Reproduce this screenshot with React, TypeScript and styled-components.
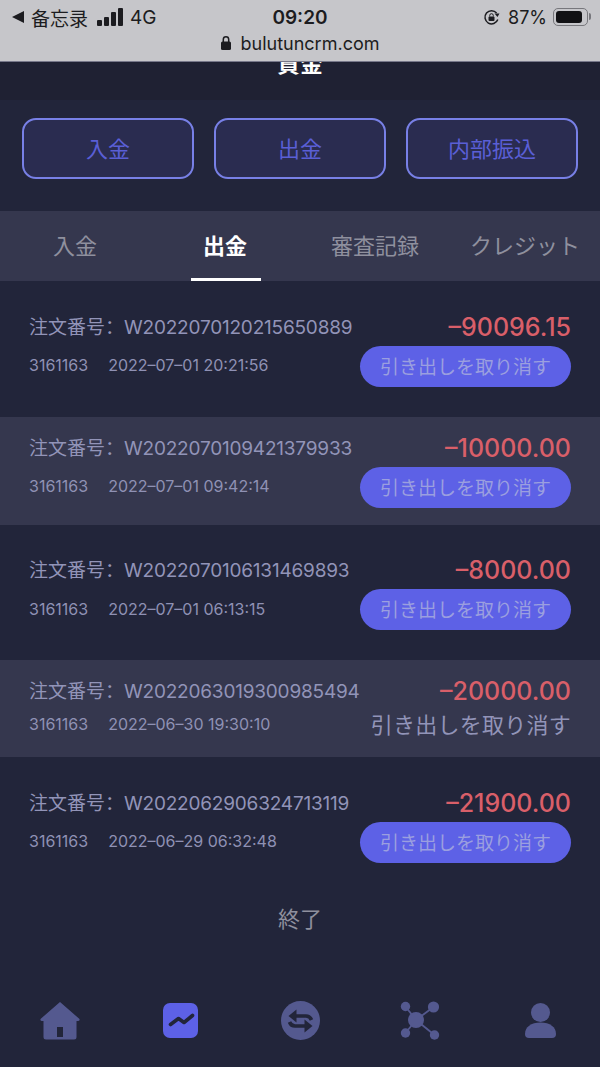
import React from 'react';
import styled, { createGlobalStyle } from 'styled-components';

const latin = `Inter, "Noto Sans CJK JP", sans-serif`;

type OrderType = {
   no: string;
   user: string;
   time: string;
   amount: string;
   striped?: boolean;
   plain?: boolean;
};

const orders: OrderType[] = [
   { no: 'W2022070120215650889', user: '3161163', time: '2022–07–01 20:21:56', amount: '–90096.15' },
   { no: 'W2022070109421379933', user: '3161163', time: '2022–07–01 09:42:14', amount: '–10000.00', striped: true },
   { no: 'W2022070106131469893', user: '3161163', time: '2022–07–01 06:13:15', amount: '–8000.00' },
   { no: 'W2022063019300985494', user: '3161163', time: '2022–06–30 19:30:10', amount: '–20000.00', striped: true, plain: true },
   { no: 'W2022062906324713119', user: '3161163', time: '2022–06–29 06:32:48', amount: '–21900.00' },
];

const HomeIcon = () => (
   <svg width="40" height="38" viewBox="0 0 40 38">
      <path
         fill="#54598f"
         fillRule="evenodd"
         d="M20 0 L39.5 17 Q40 19 38 19 H36.5 V35 Q36.5 37.5 34 37.5 H6 Q3.5 37.5 3.5 35 V19 H2 Q0 19 .5 17 Z M17 25 V35 H23 V25 Z"
      />
   </svg>
);

const TrendIcon = () => (
   <svg width="35" height="35" viewBox="0 0 35 35">
      <rect width="35" height="35" rx="7" fill="#5d61e6" />
      <path
         d="M7.5 21.5 L15.5 15.5 L21 19.5 L29.5 12.5"
         fill="none"
         stroke="#22253a"
         strokeWidth="3.6"
         strokeLinecap="round"
         strokeLinejoin="round"
      />
   </svg>
);

const SwapIcon = () => (
   <svg width="39" height="39" viewBox="0 0 39 39">
      <circle cx="19.5" cy="19.5" r="19.5" fill="#54598f" />
      <path d="M15 15 H25 Q29 15 30.5 19" fill="none" stroke="#22253a" strokeWidth="3.6" />
      <path d="M15.5 8.5 L7.5 15 L15.5 21.5 Z" fill="#22253a" />
      <path d="M24 25 H14 Q10 25 8.5 21" fill="none" stroke="#22253a" strokeWidth="3.6" />
      <path d="M23.5 18.5 L31.5 25 L23.5 31.5 Z" fill="#22253a" />
   </svg>
);

const NetworkIcon = () => (
   <svg width="40" height="40" viewBox="0 0 40 40">
      <g stroke="#54598f" strokeWidth="1.8">
         <line x1="5.5" y1="5.5" x2="16" y2="19" />
         <line x1="33.5" y1="6" x2="16" y2="19" />
         <line x1="5.5" y1="32" x2="16" y2="19" />
         <line x1="34.5" y1="34" x2="16" y2="19" />
      </g>
      <g fill="#54598f">
         <circle cx="16" cy="19" r="8" />
         <circle cx="5.5" cy="5.5" r="4.7" />
         <circle cx="33.5" cy="6" r="5.6" />
         <circle cx="5.5" cy="32" r="4.7" />
         <circle cx="34.5" cy="34" r="4.7" />
      </g>
   </svg>
);

const UserIcon = () => (
   <svg width="31" height="35" viewBox="0 0 31 35">
      <ellipse cx="15.5" cy="9.5" rx="9.5" ry="9.5" fill="#54598f" />
      <path fill="#54598f" d="M0 31 C0 24 6 19.5 15.5 19.5 C25 19.5 31 24 31 31 Q31 35 27 35 H4 Q0 35 0 31 Z" />
   </svg>
);

const navItems = [HomeIcon, TrendIcon, SwapIcon, NetworkIcon, UserIcon];

export default function App() {
   return (
      <Page>
         <GlobalStyle />
         <StatusBar>
            <StatusTop>
               <StatusLeft>
                  <BackArrow viewBox="0 0 12 12">
                     <path d="M12 0 V12 L0 6 Z" fill="#1c1c20" />
                  </BackArrow>
                  <span>备忘录</span>
                  <Signal viewBox="0 0 26 19">
                     <rect x="0" y="12" width="5" height="6" rx="1" />
                     <rect x="7" y="9" width="5" height="9" rx="1" />
                     <rect x="14" y="4" width="5" height="14" rx="1" />
                     <rect x="21" y="0" width="5" height="18" rx="1" />
                  </Signal>
                  <span>4G</span>
               </StatusLeft>
               <Clock>09:20</Clock>
               <StatusRight>
                  <svg width="17" height="17" viewBox="0 0 17 17">
                     <path
                        d="M14.8 10.5 A6.6 6.6 0 1 1 13.6 4"
                        fill="none"
                        stroke="#1c1c20"
                        strokeWidth="1.5"
                     />
                     <path d="M11.5 4.5 H16.5 L14.5 8 Z" fill="#1c1c20" />
                     <rect x="5.5" y="7.5" width="6" height="4.5" rx="1" fill="#1c1c20" />
                     <path d="M6.7 7.5 V6.5 a1.8 1.8 0 0 1 3.6 0 V7.5" fill="none" stroke="#1c1c20" strokeWidth="1" />
                  </svg>
                  <Percent>87%</Percent>
                  <Battery>
                     <BatteryFill />
                  </Battery>
               </StatusRight>
            </StatusTop>
            <UrlLine>
               <svg width="10" height="14" viewBox="0 0 10 14">
                  <rect x="0" y="5.5" width="10" height="8.5" rx="1.5" fill="#1c1c20" />
                  <path d="M2.3 6 V3.5 a2.7 2.7 0 0 1 5.4 0 V6" fill="none" stroke="#1c1c20" strokeWidth="1.5" />
               </svg>
               <span>bulutuncrm.com</span>
            </UrlLine>
         </StatusBar>

         <Header>
            <HeaderTitle>資金</HeaderTitle>
         </Header>

         <Actions>
            <ActionButton>入金</ActionButton>
            <ActionButton>出金</ActionButton>
            <ActionButton>内部振込</ActionButton>
         </Actions>

         <Tabs>
            <Tab>入金</Tab>
            <Tab $active>出金</Tab>
            <Tab>審査記録</Tab>
            <Tab>クレジット</Tab>
         </Tabs>

         {orders.map((order) => (
            <Row key={order.no} $striped={order.striped} $plain={order.plain}>
               <RowLine>
                  <OrderNo>
                     注文番号：<OrderCode>{order.no}</OrderCode>
                  </OrderNo>
                  <Amount>{order.amount}</Amount>
               </RowLine>
               <RowBottom>
                  <Meta>
                     <span>{order.user}</span>
                     <span>{order.time}</span>
                  </Meta>
                  <Cancel $plain={order.plain}>引き出しを取り消す</Cancel>
               </RowBottom>
            </Row>
         ))}

         <EndText>終了</EndText>

         <Nav>
            {navItems.map((Icon, i) => (
               <NavItem key={i}>
                  <Icon />
               </NavItem>
            ))}
         </Nav>
      </Page>
   );
}

const GlobalStyle = createGlobalStyle`
   * {
      box-sizing: border-box;
   }
   html, body {
      margin: 0;
      padding: 0;
      background: #22253a;
   }
`;

const Page = styled.div`
   width: 600px;
   height: 1067px;
   overflow: hidden;
   display: flex;
   flex-direction: column;
   background-color: #22253a;
   font-family: ${latin};
`;

const StatusBar = styled.div`
   height: 62px;
   flex-shrink: 0;
   background-color: #c6c6ca;
   border-bottom: 1px solid #77788a;
   color: #1c1c20;
`;

const StatusTop = styled.div`
   height: 34px;
   padding: 0 12px 0 12px;
   display: grid;
   grid-template-columns: 1fr auto 1fr;
   align-items: center;
   font-size: 19px;
`;

const StatusLeft = styled.div`
   display: flex;
   align-items: center;
   gap: 7px;
`;

const BackArrow = styled.svg`
   width: 12px;
   height: 12px;
`;

const Signal = styled.svg`
   width: 26px;
   height: 19px;
   margin-left: 2px;
   fill: #1c1c20;
`;

const Clock = styled.div`
   font-size: 19px;
   font-weight: 600;
`;

const StatusRight = styled.div`
   display: flex;
   align-items: center;
   justify-content: flex-end;
   gap: 8px;
`;

const Percent = styled.span`
   font-size: 18px;
   margin-right: -2px;
`;

const Battery = styled.div`
   position: relative;
   width: 35px;
   height: 18px;
   padding: 2px;
   border: 1.5px solid #77777c;
   border-radius: 5px;

   &::after {
      content: '';
      position: absolute;
      right: -4px;
      top: 4px;
      width: 2px;
      height: 7px;
      background-color: #77777c;
      border-radius: 0 2px 2px 0;
   }
`;

const BatteryFill = styled.div`
   width: 88%;
   height: 100%;
   background-color: #111114;
   border-radius: 3px;
`;

const UrlLine = styled.div`
   display: flex;
   justify-content: center;
   align-items: center;
   gap: 10px;
   height: 20px;
   margin-top: -1px;
   font-size: 18px;
`;

const Header = styled.div`
   height: 38px;
   flex-shrink: 0;
   overflow: hidden;
   display: flex;
   justify-content: center;
   background-color: #1f2133;
`;

const HeaderTitle = styled.div`
   margin-top: -13px;
   line-height: 30px;
   color: #ffffff;
   font-size: 23px;
   font-weight: 700;
`;

const Actions = styled.div`
   height: 111px;
   flex-shrink: 0;
   padding: 18px 22px 32px;
   display: grid;
   grid-template-columns: repeat(3, 1fr);
   gap: 20px;
`;

const ActionButton = styled.div`
   display: flex;
   align-items: center;
   justify-content: center;
   padding-bottom: 4px;
   background-color: #2a2c50;
   border: 2px solid #7880e6;
   border-radius: 14px;
   color: #5a5fd6;
   font-size: 22px;
`;

const Tabs = styled.div`
   height: 70px;
   flex-shrink: 0;
   display: grid;
   grid-template-columns: repeat(4, 150px);
   background-color: #35374e;
`;

const Tab = styled.div<{ $active?: boolean }>`
   position: relative;
   display: flex;
   align-items: center;
   justify-content: center;
   padding-bottom: 4px;
   white-space: nowrap;
   font-size: 22px;
   font-weight: ${(props) => (props.$active ? 700 : 400)};
   color: ${(props) => (props.$active ? '#ffffff' : '#8f909e')};

   ${(props) =>
      props.$active &&
      `&::after {
         content: '';
         position: absolute;
         left: 41px;
         right: 39px;
         bottom: 0;
         height: 3px;
         background-color: #ffffff;
      }`}
`;

const Row = styled.div<{ $striped?: boolean; $plain?: boolean }>`
   flex-shrink: 0;
   padding: ${(props) => (props.$striped ? '14px' : '28.5px')} 29px ${(props) => (props.$striped ? '17px' : '30px')} 29px;
   background-color: ${(props) => (props.$striped ? '#35374e' : '#22253a')};
`;

const RowLine = styled.div`
   display: flex;
   justify-content: space-between;
   align-items: center;
   height: 36px;
`;

const RowBottom = styled.div`
   display: flex;
   justify-content: space-between;
   align-items: center;
`;

const OrderNo = styled.div`
   padding-bottom: 5px;
   color: #9294b8;
   font-family: "Noto Sans CJK SC", sans-serif;
   font-size: 19px;
   white-space: nowrap;
`;

const OrderCode = styled.span`
   font-family: ${latin};
   letter-spacing: -0.2px;
`;

const Amount = styled.div`
   padding-bottom: 2px;
   color: #d95f69;
   font-size: 25px;
   font-weight: 500;
`;

const Meta = styled.div`
   display: flex;
   gap: 20px;
   padding-bottom: 2px;
   color: #8f91b4;
   font-size: 16px;
   white-space: nowrap;
`;

const Cancel = styled.div<{ $plain?: boolean }>`
   display: flex;
   align-items: center;
   justify-content: center;
   white-space: nowrap;
   height: ${(props) => (props.$plain ? '30px' : '41px')};
   width: ${(props) => (props.$plain ? 'auto' : '211px')};
   padding-bottom: ${(props) => (props.$plain ? '5px' : '2px')};
   border-radius: 21px;
   font-size: ${(props) => (props.$plain ? '22px' : '19px')};
   letter-spacing: ${(props) => (props.$plain ? '0.25px' : '0')};
   background-color: ${(props) => (props.$plain ? 'transparent' : '#5d61e6')};
   color: ${(props) => (props.$plain ? '#9294b8' : '#9b9fdf')};
`;

const EndText = styled.div`
   margin-top: 10px;
   text-align: center;
   color: #8f909e;
   font-size: 22px;
   line-height: 32px;
`;

const Nav = styled.div`
   margin-top: auto;
   height: 87px;
   flex-shrink: 0;
   padding-bottom: 6px;
   display: grid;
   grid-template-columns: repeat(5, 120px);
`;

const NavItem = styled.div`
   display: flex;
   align-items: center;
   justify-content: center;
`;
